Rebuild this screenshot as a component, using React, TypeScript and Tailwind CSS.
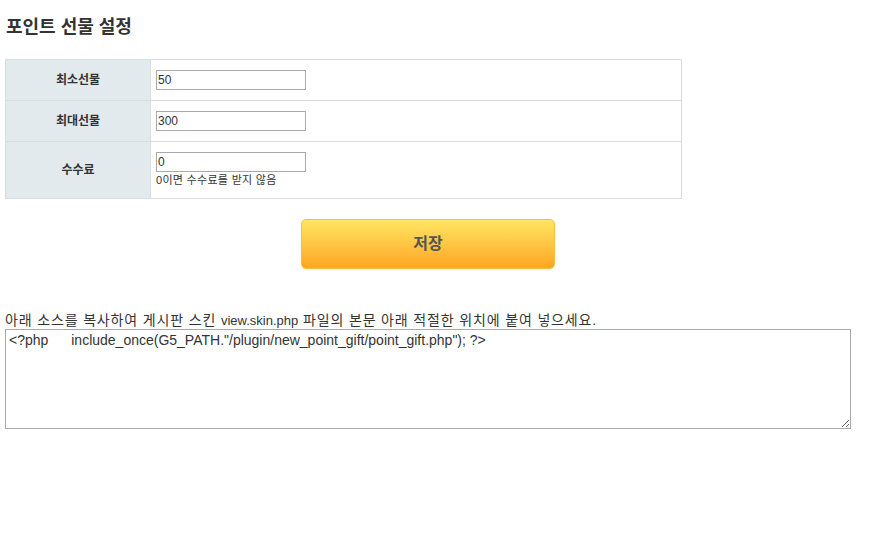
import React from "react";

const font = { fontFamily: '"Liberation Sans", Arial, "Noto Sans CJK KR", sans-serif' };

export default function App() {
  return (
    <div className="w-[870px] h-[537px] bg-white text-[#333]" style={font}>
      <div className="w-[846px] ml-[5px]">
        <div className="pt-[17px] h-[59px] text-[18px] leading-[20px] font-bold text-[#333] pl-[1px]">
          포인트 선물 설정
        </div>
        <table className="w-[677px] border-collapse border border-[#d6dee0] text-[12px]">
          <tbody>
            <tr className="h-[41px]">
              <th className="w-[145px] bg-[#e3eaee] border border-[#d6dee0] font-bold text-[12px] text-[#333] text-center">최소선물</th>
              <td className="border border-[#d6dee0] pl-[5px] align-middle">
                <input defaultValue="50" className="block w-[150px] h-[20px] border border-[#a9a9a9] px-[1px] text-[12px] text-[#333] outline-none" style={font} />
              </td>
            </tr>
            <tr className="h-[41px]">
              <th className="bg-[#e3eaee] border border-[#d6dee0] font-bold text-[12px] text-[#333] text-center">최대선물</th>
              <td className="border border-[#d6dee0] pl-[5px] align-middle">
                <input defaultValue="300" className="block w-[150px] h-[20px] border border-[#a9a9a9] px-[1px] text-[12px] text-[#333] outline-none" style={font} />
              </td>
            </tr>
            <tr className="h-[57px]">
              <th className="bg-[#e3eaee] border border-[#d6dee0] font-bold text-[12px] text-[#333] text-center">수수료</th>
              <td className="border border-[#d6dee0] pl-[5px] pt-[10px] pb-[10px] align-top">
                <input defaultValue="0" className="block w-[150px] h-[20px] border border-[#a9a9a9] px-[1px] text-[12px] text-[#333] outline-none" style={font} />
                <div className="text-[11px] leading-[15px] mt-[1px] tracking-[0.3px] text-[#333]">0이면 수수료를 받지 않음</div>
              </td>
            </tr>
          </tbody>
        </table>
        <div className="flex justify-center mt-[20px]">
          <button className="w-[254px] h-[50px] rounded-[5px] border border-[#f3c13c] bg-gradient-to-b from-[#ffe660] to-[#ffa51f] text-[16px] font-bold text-[#555] shadow-[0_1px_2px_rgba(0,0,0,0.08)]" style={font}>
            저장
          </button>
        </div>
        <div className="mt-[43px] text-[14px] leading-[17px] tracking-[0.85px] text-[#333]">
          아래 소스를 복사하여 게시판 스킨 <span className="text-[13px] tracking-normal">view.skin.php</span> 파일의 본문 아래 적절한 위치에 붙여 넣으세요.
        </div>
        <textarea
          defaultValue={'<?php\tinclude_once(G5_PATH."/plugin/new_point_gift/point_gift.php"); ?>'}
          className="block w-[846px] h-[100px] border border-[#a9a9a9] px-[3px] py-[2px] text-[14px] leading-[17px] text-[#333] outline-none [tab-size:8]"
          style={font}
        />
      </div>
    </div>
  );
}
